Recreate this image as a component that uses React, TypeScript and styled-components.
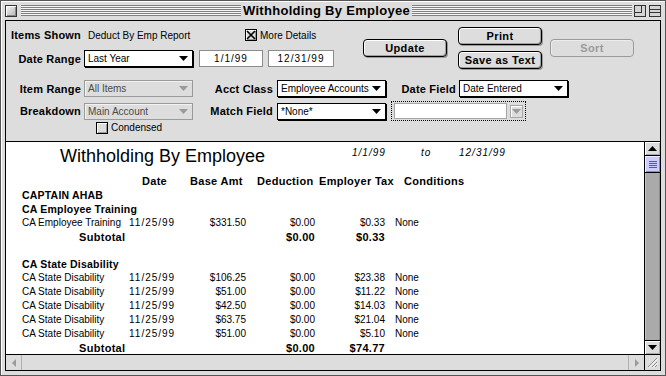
import React from 'react';
import styled, { createGlobalStyle } from 'styled-components';

interface LineItem {
  item: string;
  date: string;
  base: string;
  deduction: string;
  tax: string;
  cond: string;
}
interface Section {
  name: string;
  rows: Array<LineItem>;
  deduction: string;
  tax: string;
}

const sdi = (base: string, tax: string): LineItem => ({
  item: 'CA State Disability',
  date: '11/25/99',
  base,
  deduction: '$0.00',
  tax,
  cond: 'None',
});

const sections: Array<Section> = [
  {
    name: 'CA Employee Training',
    rows: [
      {
        item: 'CA Employee Training',
        date: '11/25/99',
        base: '$331.50',
        deduction: '$0.00',
        tax: '$0.33',
        cond: 'None',
      },
    ],
    deduction: '$0.00',
    tax: '$0.33',
  },
  {
    name: 'CA State Disability',
    rows: [
      sdi('$106.25', '$23.38'),
      sdi('$51.00', '$11.22'),
      sdi('$42.50', '$14.03'),
      sdi('$63.75', '$21.04'),
      sdi('$51.00', '$5.10'),
    ],
    deduction: '$0.00',
    tax: '$74.77',
  },
];

const GlobalStyle = createGlobalStyle`
  html, body {
    margin: 0;
    padding: 0;
    background: #dddddd;
    overflow: hidden;
  }
  body {
    font-family: "Liberation Sans", Arial, sans-serif;
    font-size: 10px;
    color: #000;
  }
`;

const Window = styled.div`
  box-sizing: border-box;
  width: 666px;
  height: 376px;
  display: flex;
  flex-direction: column;
  padding: 0 4px 4px 4px;
  background: #dddddd;
  border: 1px solid #555;
  box-shadow: inset 1px 1px 0 #fff;
`;

/* ---------- title bar ---------- */

const TitleBar = styled.div`
  height: 19px;
  flex: none;
  display: flex;
  align-items: center;
`;

const CloseBox = styled.span`
  box-sizing: border-box;
  width: 12px;
  height: 12px;
  flex: none;
  border: 1px solid #333;
  background: linear-gradient(135deg, #f4f4f4 0%, #b4b4b4 100%);
  box-shadow: inset 1px 1px 0 #fff, inset -1px -1px 0 #888;
`;

const Stripes = styled.span<{ $ml: number; $mr: number }>`
  flex: 1;
  height: 11px;
  margin: 0 ${(p) => p.$mr}px 0 ${(p) => p.$ml}px;
  background: repeating-linear-gradient(to bottom, #808080 0 1px, #f6f6f6 1px 2px);
`;

const WindowTitle = styled.span`
  font-size: 13px;
  font-weight: bold;
  letter-spacing: 0.3px;
  white-space: nowrap;
`;

const WidgetIcon = styled.svg<{ $ml: number }>`
  flex: none;
  margin-left: ${(p) => p.$ml}px;
`;

/* ---------- content ---------- */

const Content = styled.div`
  flex: 1;
  min-height: 0;
  display: flex;
  flex-direction: column;
  border: 1px solid #000;
`;

const ControlPanel = styled.div`
  box-sizing: border-box;
  height: 121px;
  flex: none;
  padding-top: 6px;
  border-bottom: 1px solid #000;
  background: #dddddd;
`;

const TopSection = styled.div`
  display: flex;
  align-items: center;
  height: 42px;
`;

const LeftColumn = styled.div`
  width: 337px;
  flex: none;
  align-self: flex-start;
  display: flex;
  flex-direction: column;
  gap: 7px;
`;

const ButtonColumn = styled.div<{ $ml: number }>`
  display: flex;
  flex-direction: column;
  gap: 6px;
  margin-left: ${(p) => p.$ml}px;
`;

const Row = styled.div<{ $h: number; $mt?: number }>`
  display: flex;
  align-items: center;
  height: ${(p) => p.$h}px;
  margin-top: ${(p) => p.$mt ?? 0}px;
`;

const Label = styled.span<{ $w: number }>`
  width: ${(p) => p.$w}px;
  flex: none;
  text-align: right;
  font-size: 11px;
  font-weight: bold;
  letter-spacing: 0.2px;
  white-space: nowrap;
`;

const InfoText = styled.span`
  width: 157px;
  flex: none;
  margin-left: 7px;
  font-size: 10px;
  white-space: nowrap;
`;

const SelectBox = styled.div<{ $w: number; $ml: number; $off?: boolean }>`
  box-sizing: border-box;
  width: ${(p) => p.$w}px;
  height: 17px;
  flex: none;
  margin-left: ${(p) => p.$ml}px;
  display: flex;
  align-items: center;
  justify-content: space-between;
  padding: 0 4px 0 3px;
  background: ${(p) => (p.$off ? '#dddddd' : '#fff')};
  border: 1px solid ${(p) => (p.$off ? '#9a9a9a' : '#000')};
  box-shadow: ${(p) => (p.$off ? 'inset 1px 1px 0 #f2f2f2' : '1px 1px 0 #000')};
  color: ${(p) => (p.$off ? '#4a4a4a' : '#000')};
  font-size: 10px;
  white-space: nowrap;
`;

const DateField = styled.div<{ $w: number; $ml: number }>`
  box-sizing: border-box;
  width: ${(p) => p.$w}px;
  height: 17px;
  flex: none;
  margin-left: ${(p) => p.$ml}px;
  border: 1px solid #8c8c8c;
  background: #fff;
  text-align: center;
  line-height: 15px;
  font-size: 10px;
  letter-spacing: 1px;
`;

const Button = styled.div<{ $ml?: number; $off?: boolean }>`
  box-sizing: border-box;
  width: 84px;
  height: 18px;
  flex: none;
  margin-left: ${(p) => p.$ml ?? 0}px;
  display: flex;
  align-items: center;
  justify-content: center;
  border: 1px solid ${(p) => (p.$off ? '#9a9a9a' : '#000')};
  border-radius: 4px;
  background: #dddddd;
  box-shadow: ${(p) =>
    p.$off ? 'inset 1px 1px 0 #ececec' : 'inset 1px 1px 0 #fff, inset -1px -1px 0 #a0a0a0, 1px 1px 0 #9a9a9a'};
  color: ${(p) => (p.$off ? '#9a9a9a' : '#000')};
  font-size: 11px;
  font-weight: bold;
  letter-spacing: 0.4px;
`;

const CheckGroup = styled.label<{ $ml?: number }>`
  display: flex;
  align-items: center;
  gap: 3px;
  margin-left: ${(p) => p.$ml ?? 0}px;
  font-size: 10px;
  white-space: nowrap;
`;

const CheckBox = styled.span`
  box-sizing: border-box;
  width: 12px;
  height: 12px;
  flex: none;
  display: flex;
  align-items: center;
  justify-content: center;
  border: 1px solid #000;
  background: #dddddd;
  box-shadow: inset 1px 1px 0 #fff, inset -1px -1px 0 #999;
`;

const FocusRing = styled.div`
  box-sizing: border-box;
  width: 135px;
  height: 20px;
  flex: none;
  margin-left: 5px;
  display: flex;
  align-items: center;
  gap: 3px;
  padding: 0 2px;
  border: 1px dotted #000;
`;

const ComboField = styled.div`
  box-sizing: border-box;
  width: 114px;
  height: 16px;
  border: 1px solid #a6a6a6;
  background: #fff;
`;

const ComboButton = styled.div`
  box-sizing: border-box;
  width: 13px;
  height: 13px;
  display: flex;
  align-items: center;
  justify-content: center;
  border: 1px solid #a6a6a6;
  background: #dddddd;
  box-shadow: inset 1px 1px 0 #fff;
`;

/* ---------- report ---------- */

const ReportArea = styled.div`
  flex: 1;
  min-height: 0;
  display: flex;
`;

const ReportBody = styled.div`
  flex: 1;
  min-width: 0;
  background: #fff;
  overflow: hidden;
  padding: 4px 0 0 16px;
`;

const TitleRow = styled.div`
  display: flex;
  align-items: flex-start;
  height: 28px;
`;

const ReportTitle = styled.span`
  width: 292px;
  flex: none;
  padding-left: 38px;
  font-size: 18px;
  line-height: 20px;
  white-space: nowrap;
`;

const RangeText = styled.span<{ $w?: number }>`
  width: ${(p) => (p.$w ? `${p.$w}px` : 'auto')};
  flex: none;
  font-size: 10px;
  font-style: italic;
  line-height: 14px;
  letter-spacing: 1px;
`;

const Line = styled.div`
  display: grid;
  grid-template-columns: 107px 61px 56px 69px 70px 1fr;
  height: 14px;
  line-height: 14px;
  font-size: 10px;
  white-space: nowrap;
`;

const Cell = styled.span<{ $right?: boolean; $bold?: boolean; $pad?: number; $spaced?: boolean }>`
  text-align: ${(p) => (p.$right ? 'right' : 'left')};
  padding-left: ${(p) => p.$pad ?? 0}px;
  font-size: ${(p) => (p.$bold ? '11px' : '10px')};
  font-weight: ${(p) => (p.$bold ? 'bold' : 'normal')};
  letter-spacing: ${(p) => (p.$spaced ? '1px' : p.$bold ? '0.3px' : '0')};
`;

const GroupHeading = styled.div<{ $mt?: number }>`
  height: 14px;
  line-height: 14px;
  margin-top: ${(p) => p.$mt ?? 0}px;
  font-size: 10.5px;
  font-weight: bold;
  letter-spacing: 0.2px;
  white-space: nowrap;
`;

/* ---------- scroll bars ---------- */

const VScroll = styled.div`
  box-sizing: border-box;
  width: 16px;
  flex: none;
  display: flex;
  flex-direction: column;
  border-left: 1px solid #000;
  background: #dddddd;
`;

const ArrowBox = styled.div<{ $edge: 'top' | 'bottom' }>`
  box-sizing: border-box;
  height: 14px;
  flex: none;
  display: flex;
  align-items: center;
  justify-content: center;
  background: #dddddd;
  box-shadow: inset 1px 1px 0 #fff, inset -1px -1px 0 #aaa;
  ${(p) => (p.$edge === 'top' ? 'border-bottom: 1px solid #000;' : 'border-top: 1px solid #000;')}
`;

const Thumb = styled.div`
  box-sizing: border-box;
  height: 17px;
  flex: none;
  display: flex;
  align-items: center;
  justify-content: center;
  border-bottom: 1px solid #000;
  background: #ccccff;
  box-shadow: inset 1px 1px 0 #eeeeff, inset -1px -1px 0 #8888cc;
`;

const Track = styled.div`
  flex: 1;
  background: #aaaaaa;
  box-shadow: inset 1px 0 0 #c4c4c4, inset -1px 0 0 #8c8c8c;
`;

const HScroll = styled.div`
  box-sizing: border-box;
  height: 16px;
  flex: none;
  display: flex;
  border-top: 1px solid #000;
  background: #dddddd;
`;

const HArrow = styled.div<{ $side: 'left' | 'right' }>`
  width: 15px;
  flex: none;
  display: flex;
  align-items: center;
  justify-content: center;
  ${(p) => (p.$side === 'left' ? 'border-right: 1px solid #b0b0b0;' : 'border-left: 1px solid #b0b0b0;')}
`;

const HTrack = styled.div`
  flex: 1;
`;

const GrowBox = styled.div`
  box-sizing: border-box;
  width: 16px;
  flex: none;
  display: flex;
  align-items: center;
  justify-content: center;
  border-left: 1px solid #000;
`;

/* ---------- small drawings ---------- */

const DownTriangle: React.FC<{ color?: string }> = ({ color = '#000' }) => (
  <svg width="9" height="5" viewBox="0 0 9 5">
    <polygon points="0,0 9,0 4.5,5" fill={color} />
  </svg>
);

const UpTriangle: React.FC = () => (
  <svg width="9" height="5" viewBox="0 0 9 5">
    <polygon points="0,5 9,5 4.5,0" fill="#000" />
  </svg>
);

const SideTriangle: React.FC<{ dir: 'left' | 'right' }> = ({ dir }) => (
  <svg width="4" height="8" viewBox="0 0 4 8">
    <polygon points={dir === 'left' ? '4,0 4,8 0,4' : '0,0 0,8 4,4'} fill="#9a9a9a" />
  </svg>
);

const XMark: React.FC = () => (
  <svg width="10" height="10" viewBox="0 0 10 10">
    <path d="M1 1 L9 9 M9 1 L1 9" stroke="#000" strokeWidth="1.6" />
  </svg>
);

const Grip: React.FC = () => (
  <svg width="8" height="9" viewBox="0 0 8 9">
    {[1, 3, 5, 7].map((y) => (
      <line key={y} x1="0" y1={y + 0.5} x2="8" y2={y + 0.5} stroke="#5555aa" strokeWidth="1" />
    ))}
  </svg>
);

const GrowLines: React.FC = () => (
  <svg width="11" height="11" viewBox="0 0 11 11">
    <path d="M1 10 L10 1 M5 10 L10 5 M8 10 L10 8" stroke="#8a8a8a" strokeWidth="1" />
    <path d="M2 10.5 L10.5 2 M6 10.5 L10.5 6" stroke="#fff" strokeWidth="1" />
  </svg>
);

/* ---------- pieces ---------- */

const Select: React.FC<{ w?: number; ml: number; off?: boolean; value: string }> = ({
  w = 109,
  ml,
  off,
  value,
}) => (
  <SelectBox $w={w} $ml={ml} $off={off}>
    <span>{value}</span>
    <DownTriangle color={off ? '#9a9a9a' : '#000'} />
  </SelectBox>
);

const SectionBlock: React.FC<{ section: Section; mt?: number }> = ({ section, mt }) => (
  <>
    <GroupHeading $mt={mt}>{section.name}</GroupHeading>
    {section.rows.map((r, i) => (
      <Line key={i}>
        <Cell>{r.item}</Cell>
        <Cell $spaced>{r.date}</Cell>
        <Cell $right>{r.base}</Cell>
        <Cell $right>{r.deduction}</Cell>
        <Cell $right>{r.tax}</Cell>
        <Cell $pad={10}>{r.cond}</Cell>
      </Line>
    ))}
    <Line>
      <Cell $bold $pad={57}>
        Subtotal
      </Cell>
      <Cell />
      <Cell />
      <Cell $right $bold>
        {section.deduction}
      </Cell>
      <Cell $right $bold>
        {section.tax}
      </Cell>
      <Cell />
    </Line>
  </>
);

export default function App() {
  return (
    <>
      <GlobalStyle />
      <Window>
        <TitleBar>
          <CloseBox />
          <Stripes $ml={4} $mr={2} />
          <WindowTitle>Withholding By Employee</WindowTitle>
          <Stripes $ml={2} $mr={2} />
          <WidgetIcon $ml={0} width="12" height="12" viewBox="0 0 12 12">
            <rect x="0.5" y="0.5" width="11" height="11" fill="#d4d4d4" stroke="#333" />
            <rect x="0.5" y="0.5" width="7" height="7" fill="none" stroke="#333" />
          </WidgetIcon>
          <WidgetIcon $ml={3} width="12" height="12" viewBox="0 0 12 12">
            <rect x="0.5" y="0.5" width="11" height="11" fill="#d4d4d4" stroke="#333" />
            <line x1="0" y1="4.5" x2="12" y2="4.5" stroke="#333" />
            <line x1="0" y1="7.5" x2="12" y2="7.5" stroke="#333" />
          </WidgetIcon>
        </TitleBar>

        <Content>
          <ControlPanel>
            <TopSection>
              <LeftColumn>
                <Row $h={16}>
                  <Label $w={75}>Items Shown</Label>
                  <InfoText>Deduct By Emp Report</InfoText>
                  <CheckGroup>
                    <CheckBox>
                      <XMark />
                    </CheckBox>
                    More Details
                  </CheckGroup>
                </Row>
                <Row $h={17}>
                  <Label $w={75}>Date Range</Label>
                  <Select ml={3} value="Last Year" />
                  <DateField $w={64} $ml={6}>
                    1/1/99
                  </DateField>
                  <DateField $w={66} $ml={5}>
                    12/31/99
                  </DateField>
                </Row>
              </LeftColumn>
              <Button $ml={20}>Update</Button>
              <ButtonColumn $ml={11}>
                <Button>Print</Button>
                <Button>Save as Text</Button>
              </ButtonColumn>
              <Button $ml={8} $off>
                Sort
              </Button>
            </TopSection>

            <Row $h={17} $mt={11}>
              <Label $w={75}>Item Range</Label>
              <Select ml={3} off value="All Items" />
              <Label $w={80}>Acct Class</Label>
              <Select ml={4} value="Employee Accounts" />
              <Label $w={70}>Date Field</Label>
              <Select ml={3} value="Date Entered" />
            </Row>
            <Row $h={20} $mt={4}>
              <Label $w={75}>Breakdown</Label>
              <Select ml={3} off value="Main Account" />
              <Label $w={80}>Match Field</Label>
              <Select ml={4} value="*None*" />
              <FocusRing>
                <ComboField />
                <ComboButton>
                  <DownTriangle color="#9a9a9a" />
                </ComboButton>
              </FocusRing>
            </Row>
            <Row $h={13}>
              <CheckGroup $ml={90}>
                <CheckBox />
                Condensed
              </CheckGroup>
            </Row>
          </ControlPanel>

          <ReportArea>
            <ReportBody>
              <TitleRow>
                <ReportTitle>Withholding By Employee</ReportTitle>
                <RangeText $w={69}>1/1/99</RangeText>
                <RangeText $w={38}>to</RangeText>
                <RangeText>12/31/99</RangeText>
              </TitleRow>
              <Line>
                <Cell />
                <Cell $bold $pad={13}>
                  Date
                </Cell>
                <Cell $bold>Base Amt</Cell>
                <Cell $bold $pad={11}>
                  Deduction
                </Cell>
                <Cell $bold $pad={4}>
                  Employer Tax
                </Cell>
                <Cell $bold $pad={19}>
                  Conditions
                </Cell>
              </Line>
              <GroupHeading>CAPTAIN AHAB</GroupHeading>
              {sections.map((s, i) => (
                <SectionBlock key={s.name} section={s} mt={i > 0 ? 13 : 0} />
              ))}
            </ReportBody>
            <VScroll>
              <ArrowBox $edge="top">
                <UpTriangle />
              </ArrowBox>
              <Thumb>
                <Grip />
              </Thumb>
              <Track />
              <ArrowBox $edge="bottom">
                <DownTriangle />
              </ArrowBox>
            </VScroll>
          </ReportArea>

          <HScroll>
            <HArrow $side="left">
              <SideTriangle dir="left" />
            </HArrow>
            <HTrack />
            <HArrow $side="right">
              <SideTriangle dir="right" />
            </HArrow>
            <GrowBox>
              <GrowLines />
            </GrowBox>
          </HScroll>
        </Content>
      </Window>
    </>
  );
}
